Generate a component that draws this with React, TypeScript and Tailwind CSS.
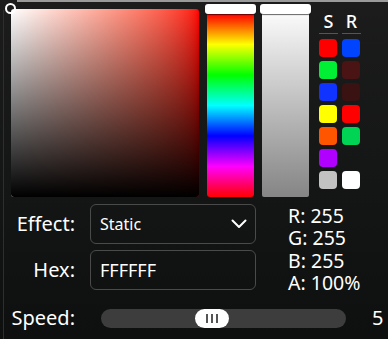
import React from "react";

const swatchesS = ["#ff0000", "#00ee33", "#1133ff", "#ffff00", "#ff5500", "#b000ff", "#c2c2c2"];
const swatchesR = ["#0044ff", "#4a1414", "#3a1212", "#ff0000", "#00d455", "", "#ffffff"];

const Handle = () => (
  <div className="h-[10px] w-[51px] rounded-[3px] bg-white shadow-[0_1px_1px_rgba(0,0,0,0.6)] relative z-10" />
);

export default function App() {
  return (
    <div
      className="relative w-[388px] h-[339px] overflow-hidden bg-gradient-to-b from-[#1c1c1c] to-[#0e1010] text-white"
      style={{ fontFamily: '"Noto Sans", "Open Sans", sans-serif' }}
    >
      {/* frame edges */}
      <div className="absolute left-[17px] right-0 top-0 h-[2px] bg-[#9a9a9a]" />
      <div className="absolute left-[3px] top-[10px] bottom-0 w-px bg-[#2e2e2e]" />

      {/* top: picker, hue, value, swatches */}
      <div className="flex pt-[4px] pl-[11px]">
        <div className="relative mt-[5px] w-[188px] h-[188px] rounded-[3px] overflow-hidden bg-gradient-to-r from-white to-[#ff0000]">
          <div className="absolute inset-0 bg-gradient-to-b from-transparent to-black" />
        </div>

        <div className="ml-[6px] flex flex-col">
          <Handle />
          <div className="mx-[2px] h-[183px] rounded-b-[3px] bg-[linear-gradient(to_bottom,#ff0000_0%,#ffff00_16.6%,#00ff00_33.3%,#00ffff_50%,#0000ff_66.6%,#ff00ff_83.3%,#ff0000_100%)]" />
        </div>

        <div className="ml-[4px] flex flex-col">
          <Handle />
          <div className="mx-[2px] h-[183px] rounded-b-[2px] bg-gradient-to-b from-[#fafafa] to-[#858585]" />
        </div>

        <div className="ml-[8px] flex flex-col">
          <div className="flex gap-[4px] mt-[6px]">
            <div className="w-[19px] text-center text-[18px] leading-[23px] font-medium border-b border-[#555]">S</div>
            <div className="w-[19px] text-center text-[18px] leading-[23px] font-medium border-b border-[#555]">R</div>
          </div>
          <div className="grid grid-cols-[18px_18px] gap-x-[5px] gap-y-[4px] mt-[5px]">
            {swatchesS.map((c, i) => (
              <React.Fragment key={i}>
                <div className="w-[18px] h-[18px] rounded-[4px]" style={{ background: c }} />
                {swatchesR[i] ? (
                  <div className="w-[18px] h-[18px] rounded-[4px]" style={{ background: swatchesR[i] }} />
                ) : (
                  <div className="w-[18px] h-[18px]" />
                )}
              </React.Fragment>
            ))}
          </div>
        </div>
      </div>

      {/* picker cursor */}
      <div className="absolute left-[5px] top-[3px] w-[11px] h-[11px] rounded-full border-2 border-white" />

      {/* effect / hex / rgba */}
      <div className="flex h-[86px] mt-[7px]">
        <div className="flex flex-col gap-[6px]">
          <div className="flex items-center">
            <span className="w-[75px] text-right text-[20px]">Effect:</span>
            <div className="ml-[15px] w-[166px] h-[40px] rounded-[6px] border border-[#4a4a4a] flex items-center justify-between pl-[9px] pr-[8px]">
              <span className="text-[16px]">Static</span>
              <svg width="16" height="10" viewBox="0 0 16 10" fill="none">
                <path d="M1.5 1.5 L8 8 L14.5 1.5" stroke="white" strokeWidth="2" strokeLinecap="round" strokeLinejoin="round" />
              </svg>
            </div>
          </div>
          <div className="flex items-center">
            <span className="w-[75px] text-right text-[20px]">Hex:</span>
            <div className="ml-[15px] w-[166px] h-[40px] rounded-[6px] border border-[#4a4a4a] flex items-center pl-[9px]">
              <span className="text-[18px]">FFFFFF</span>
            </div>
          </div>
        </div>
        <div className="ml-[32px] mt-[1px] text-[19.5px] leading-[22.4px]">
          <div>R: 255</div>
          <div>G: 255</div>
          <div>B: 255</div>
          <div>A: 100%</div>
        </div>
      </div>

      {/* speed */}
      <div className="flex items-center h-[24px] mt-[16px]">
        <span className="w-[75px] text-right text-[20px]">Speed:</span>
        <div className="relative ml-[26px] w-[245px] h-[19px] rounded-full bg-[#3d3d3d]">
          <div className="absolute left-[94px] top-0 w-[34px] h-[19px] rounded-full bg-white flex items-center justify-center gap-[3px]">
            <span className="w-[2px] h-[9px] bg-[#555]" />
            <span className="w-[2px] h-[9px] bg-[#555]" />
            <span className="w-[2px] h-[9px] bg-[#555]" />
          </div>
        </div>
        <span className="ml-[26px] text-[20px]">5</span>
      </div>
    </div>
  );
}
